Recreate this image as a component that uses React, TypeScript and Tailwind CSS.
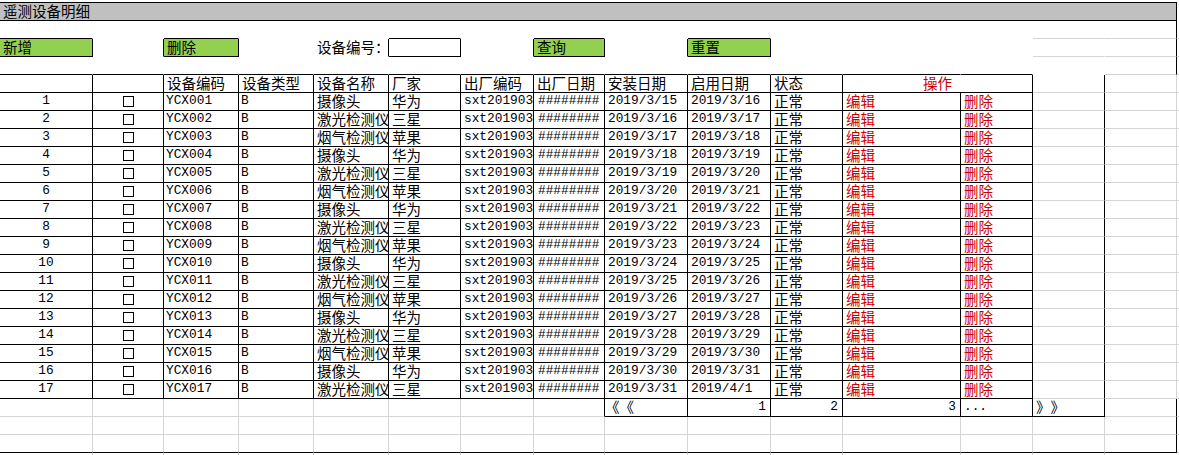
import clsx from "clsx";
import type { ReactNode } from "react";

// column widths, each one includes its right border pixel
const W = [
    "w-[93px]", "w-[71px]", "w-[75px]", "w-[75px]", "w-[75px]", "w-[72px]", "w-[73px]", "w-[71px]",
    "w-[83px]", "w-[83px]", "w-[72px]", "w-[118px]", "w-[72px]", "w-[72px]", "w-[72px]", "w-[2px]",
];

// k = black line, g = grid line, n = no line (keeps the pixel), x = nothing
const BB: Record<string, string> = {
    k: "border-b border-b-black",
    g: "border-b border-b-[#d4d4d4]",
    n: "border-b border-b-transparent",
    x: "",
};
const BR: Record<string, string> = {
    k: "border-r border-r-black",
    g: "border-r border-r-[#d4d4d4]",
    n: "border-r border-r-transparent",
    x: "",
};

const mono = "font-['Liberation_Mono',monospace] text-[12.8px]";
const red = "text-[#cc0000]";
const green = "bg-[#92d050]";

type Spec = { c?: ReactNode; cls?: string; span?: number; w?: string };

function Row({ b, r, cells = {}, h = "h-[18px]" }: { b: string; r: string; cells?: Record<number, Spec>; h?: string }) {
    const out: ReactNode[] = [];
    for (let i = 0; i < 16; i++) {
        const sp = cells[i] ?? {};
        const last = i + (sp.span ?? 1) - 1;
        out.push(
            <div
                key={i}
                className={clsx(
                    "flex shrink-0 items-center overflow-hidden whitespace-nowrap",
                    sp.w ?? W[i],
                    BB[b[last]],
                    BR[r[last]],
                    sp.cls
                )}
            >
                {sp.c}
            </div>
        );
        i = last;
    }
    return <div className={clsx("flex", h)}>{out}</div>;
}

const names = ["摄像头", "激光检测仪", "烟气检测仪"];
const makers = ["华为", "三星", "苹果"];

const rows = Array.from({ length: 17 }, (_, i) => ({
    n: i + 1,
    id: "YCX" + String(i + 1).padStart(3, "0"),
    name: names[i % 3],
    maker: makers[i % 3],
    install: `2019/3/${15 + i}`,
    start: i === 16 ? "2019/4/1" : `2019/3/${16 + i}`,
}));

const TABLE_B = "kkkkkkkkkkkkkggg";
const TABLE_R = "kkkkkkkkkkkkkkgx";

export default function App() {
    return (
        <div className="h-[455px] w-[1179px] overflow-hidden bg-white font-['Noto_Sans_CJK_SC',sans-serif] text-[14.5px] leading-none text-black [text-spacing-trim:space-all]">
            <div className="h-[2px]" />
            <div className="flex h-[19px]">
                <div className="flex w-[1177px] items-center border-y border-r border-black bg-[#c0c0c0] pl-[3px]">
                    遥测设备明细
                </div>
            </div>

            <Row b="knknnknknknnnggg" r="nnnnnnnnnnnnnnkx" />
            <Row
                b="knknnknknknnnggg"
                r="kkknkkkkkknnnnkx"
                cells={{
                    0: { c: "新增", cls: clsx(green, "pl-[3px]") },
                    2: { c: "删除", cls: clsx(green, "pl-[3px]") },
                    4: { c: "设备编号：", cls: "pl-[3px]" },
                    7: { c: "查询", cls: clsx(green, "pl-[3px]") },
                    9: { c: "重置", cls: clsx(green, "pl-[3px]") },
                }}
            />
            <Row b="kkkkkkkkkkkkkngg" r="nnnnnnnnnnnnnnkx" />

            <Row
                b={TABLE_B}
                r={TABLE_R}
                cells={{
                    2: { c: "设备编码", cls: "pl-[3px]" },
                    3: { c: "设备类型", cls: "pl-[3px]" },
                    4: { c: "设备名称", cls: "pl-[3px]" },
                    5: { c: "厂家", cls: "pl-[3px]" },
                    6: { c: "出厂编码", cls: "pl-[3px]" },
                    7: { c: "出厂日期", cls: "pl-[3px]" },
                    8: { c: "安装日期", cls: "pl-[3px]" },
                    9: { c: "启用日期", cls: "pl-[3px]" },
                    10: { c: "状态", cls: "pl-[3px]" },
                    11: { c: "操作", span: 2, w: "w-[190px]", cls: clsx(red, "justify-center") },
                }}
            />

            {rows.map((row) => (
                <Row
                    key={row.n}
                    b={TABLE_B}
                    r={TABLE_R}
                    cells={{
                        0: { c: row.n, cls: clsx(mono, "justify-center") },
                        1: { c: <span className="h-[11px] w-[11px] border border-black" />, cls: "justify-center pl-[1px]" },
                        2: { c: row.id, cls: clsx(mono, "pl-[2px]") },
                        3: { c: "B", cls: clsx(mono, "pl-[2px]") },
                        4: { c: row.name, cls: "pl-[3px]" },
                        5: { c: row.maker, cls: "pl-[3px]" },
                        6: { c: "sxt20190315001", cls: clsx(mono, "pl-[3px]") },
                        7: { c: "########", cls: clsx(mono, "pl-[4px]") },
                        8: { c: row.install, cls: clsx(mono, "pl-[3px]") },
                        9: { c: row.start, cls: clsx(mono, "pl-[3px]") },
                        10: { c: "正常", cls: "pl-[3px]" },
                        11: { c: "编辑", cls: clsx(red, "pl-[3px]") },
                        12: { c: "删除", cls: clsx(red, "pl-[3px]") },
                    }}
                />
            ))}

            <Row
                b="ggggggggkkkkkkgg"
                r="gggggggkkkkkkkkx"
                cells={{
                    8: { c: "《《", cls: "pl-[0px]" },
                    9: { c: "1", cls: clsx(mono, "justify-end pr-[4px]") },
                    10: { c: "2", cls: clsx(mono, "justify-end pr-[4px]") },
                    11: { c: "3", cls: clsx(mono, "justify-end pr-[4px]") },
                    12: { c: "...", cls: clsx(mono, "pl-[3px]") },
                    13: { c: "》》", cls: "pl-[3px]" },
                }}
            />
            <Row b="gggggggggggggggg" r="ggggggggggggggkx" />
            <Row b="kkkkkkkkkkkkkkkg" r="ggggggggggggggkx" />
            <Row b="xxxxxxxxxxxxxxxx" r="ggggggggggggggxx" h="h-[2px]" />
        </div>
    );
}
